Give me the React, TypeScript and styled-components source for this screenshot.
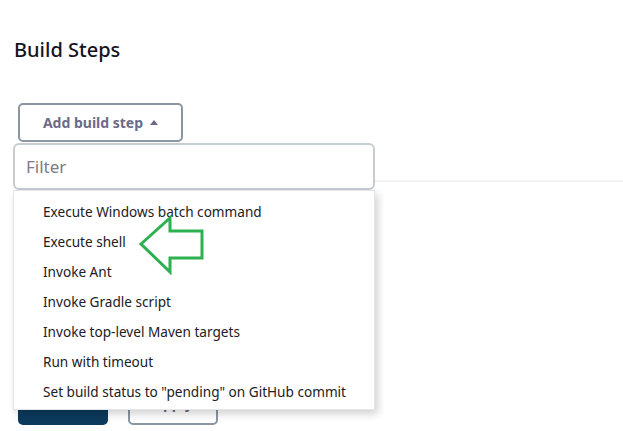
import React from 'react';
import styled, { createGlobalStyle } from 'styled-components';

const GlobalStyle = createGlobalStyle`
  html, body {
    margin: 0;
    padding: 0;
    background: #ffffff;
    font-family: "Noto Sans", "Open Sans", sans-serif;
    color: #14141f;
  }
`;

const Page = styled.div`
  width: 623px;
  height: 431px;
  overflow: hidden;
  position: relative;
`;

const Section = styled.section`
  padding: 0 0 0 14px;
`;

const Title = styled.h2`
  margin: 0;
  padding-top: 36px;
  font-size: 20px;
  font-weight: 500;
  line-height: 28px;
  color: #14141f;
`;

const StepArea = styled.div`
  position: relative;
  margin-top: 39px;
  margin-left: 4px;
  width: 165px;
`;

const AddButton = styled.button`
  display: flex;
  align-items: center;
  justify-content: center;
  gap: 7px;
  width: 165px;
  height: 39px;
  box-sizing: border-box;
  background: #ffffff;
  border: 2px solid #8b96a3;
  border-radius: 5px;
  font-family: inherit;
  font-size: 14px;
  font-weight: 700;
  color: #6b6b88;
  cursor: pointer;
`;

const Caret = styled.span`
  width: 0;
  height: 0;
  border-left: 4px solid transparent;
  border-right: 4px solid transparent;
  border-bottom: 5px solid #6b6b88;
  margin-top: -1px;
`;

const Divider = styled.div`
  margin-top: 38px;
  height: 2px;
  background: #f2f2f4;
`;

const Actions = styled.div`
  display: flex;
  gap: 20px;
  margin-top: 205px;
  padding-left: 4px;
`;

const ActionButton = styled.button<{ primary?: boolean }>`
  width: 90px;
  height: 38px;
  box-sizing: border-box;
  padding: 0 0 5px;
  border-radius: 5px;
  font-family: inherit;
  font-size: 14px;
  font-weight: 700;
  background: ${p => (p.primary ? '#0b3a5c' : '#ffffff')};
  color: ${p => (p.primary ? '#ffffff' : '#6b6b88')};
  border: ${p => (p.primary ? 'none' : '2px solid #8b96a3')};
`;

const Menu = styled.div`
  position: absolute;
  top: 40px;
  left: -5px;
  width: 362px;
  z-index: 5;
`;

const FilterInput = styled.input`
  display: block;
  width: 362px;
  height: 47px;
  box-sizing: border-box;
  border: 2px solid #c6ccd2;
  border-radius: 6px;
  padding: 0 11px;
  font-family: inherit;
  font-size: 17px;
  color: #14141f;
  background: #ffffff;
  outline: none;
  &::placeholder {
    color: #7c7c86;
  }
`;

const List = styled.ul`
  list-style: none;
  margin: 0;
  padding: 6px 0 2px;
  background: #ffffff;
  border: 1px solid #e3e5e8;
  box-shadow: 3px 4px 8px rgba(0, 0, 0, 0.18);
`;

const Item = styled.li`
  height: 30px;
  line-height: 30px;
  padding-left: 29px;
  font-size: 13.6px;
  color: #202024;
  white-space: nowrap;
`;

const Pointer = styled.svg`
  position: absolute;
  left: 125px;
  top: 72px;
  pointer-events: none;
`;

const items = [
  'Execute Windows batch command',
  'Execute shell',
  'Invoke Ant',
  'Invoke Gradle script',
  'Invoke top-level Maven targets',
  'Run with timeout',
  'Set build status to "pending" on GitHub commit',
];

export default function App() {
  return (
    <Page>
      <GlobalStyle />
      <Section>
        <Title>Build Steps</Title>
        <StepArea>
          <AddButton>
            Add build step <Caret />
          </AddButton>
          <Menu>
            <FilterInput placeholder="Filter" />
            <List>
              {items.map(t => (
                <Item key={t}>{t}</Item>
              ))}
            </List>
            <Pointer width="70" height="62" viewBox="0 0 70 62">
              <path
                d="M3 29 L32 3 L32 16 L64 16 L64 43 L32 43 L32 57 Z"
                fill="none"
                stroke="#2db04f"
                strokeWidth="3"
                strokeLinejoin="miter"
              />
            </Pointer>
          </Menu>
        </StepArea>
        <Divider />
        <Actions>
          <ActionButton primary>Save</ActionButton>
          <ActionButton>Apply</ActionButton>
        </Actions>
      </Section>
    </Page>
  );
}
